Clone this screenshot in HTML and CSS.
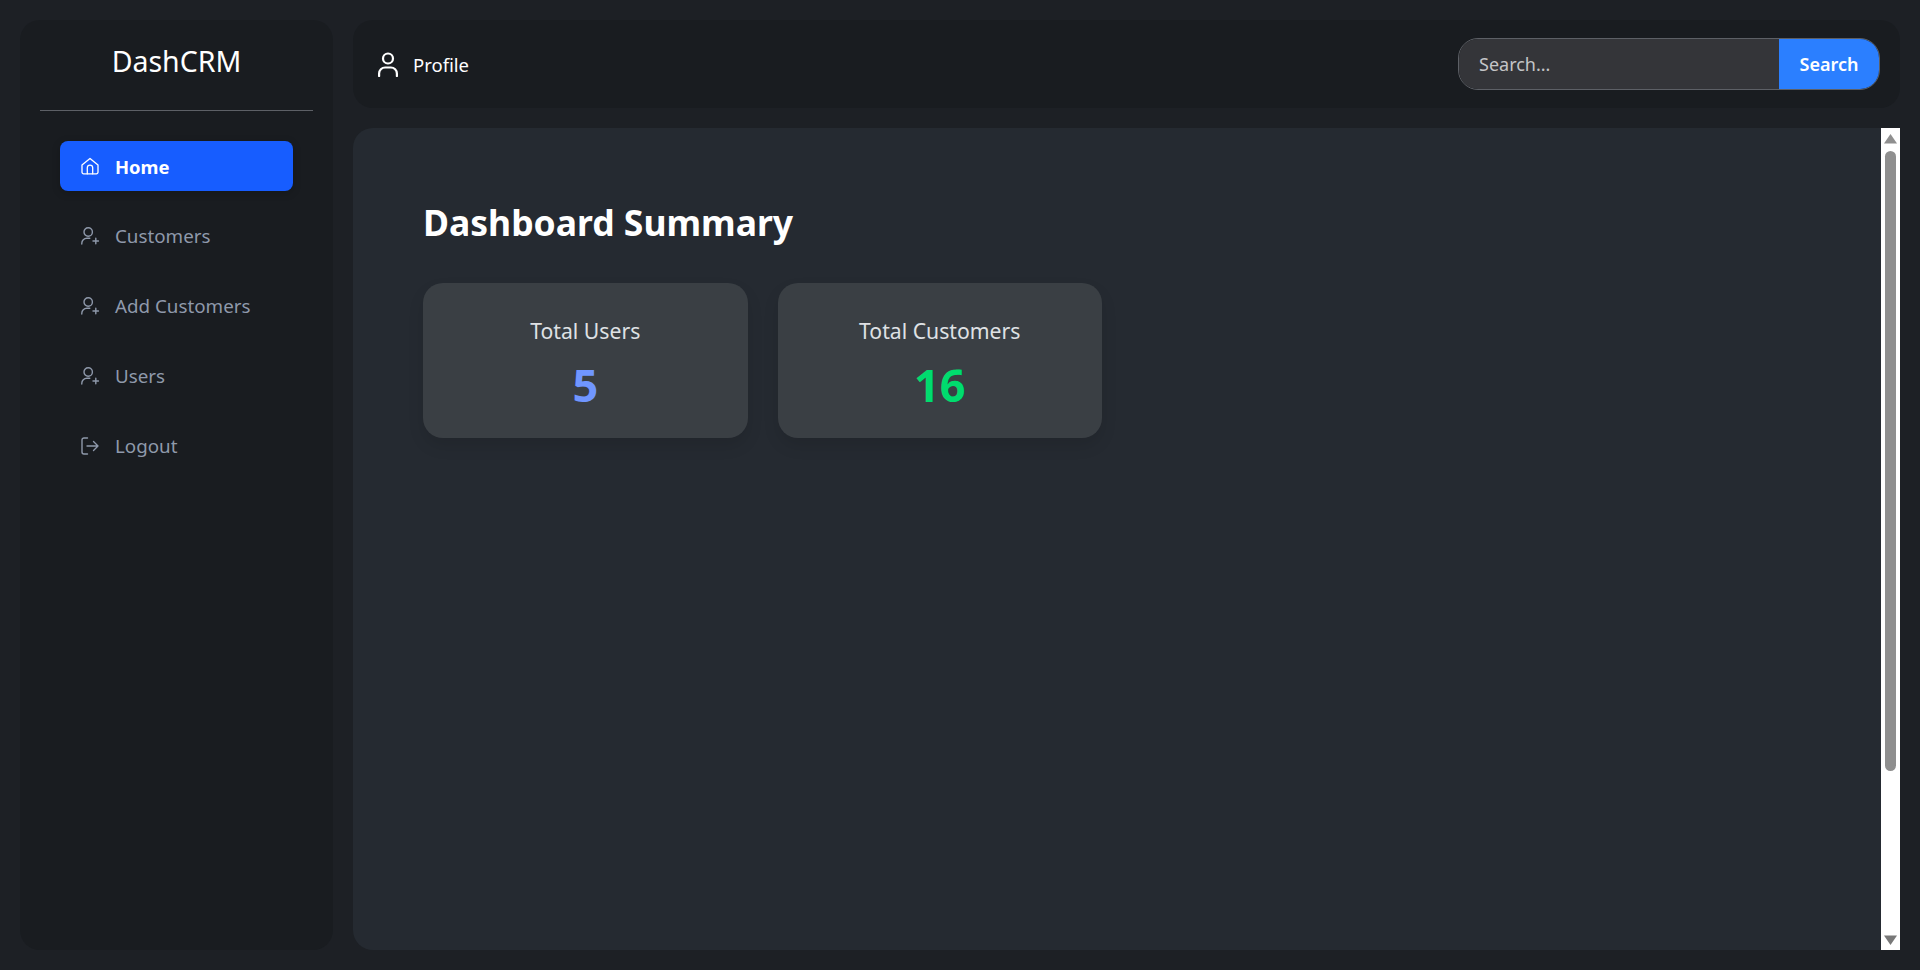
FILE: index.html
```html
<!DOCTYPE html>
<html lang="en">
<head>
<meta charset="utf-8">
<title>DashCRM</title>
<link rel="stylesheet" href="styles.css">
</head>
<body>
<div class="app">
  <aside class="sidebar">
    <h1 class="brand">DashCRM</h1>
    <hr class="rule">
    <nav class="nav">
      <a class="nav-item active" href="#">
        <svg class="nav-icon" viewBox="0 0 18 18" fill="none" stroke="currentColor" stroke-width="1.3" stroke-linejoin="round" stroke-linecap="round"><path d="M1 8l8-6.600L17 8v7.200a1.600 1.600 0 0 1-1.600 1.600H2.600A1.600 1.600 0 0 1 1 15.200z"/><path d="M6.300 16.800v-6a2.700 2.700 0 0 1 5.400 0v6"/></svg>
        <span>Home</span>
      </a>
      <a class="nav-item" href="#">
        <svg class="nav-icon" viewBox="0 0 18 18" fill="none" stroke="currentColor" stroke-width="1.4" stroke-linecap="round"><circle cx="7.200" cy="5" r="4.200"/><path d="M.8 17v-.8a5 5 0 0 1 5-5h3"/><path d="M14.800 11.200v5.600M12 14h5.600"/></svg>
        <span>Customers</span>
      </a>
      <a class="nav-item" href="#">
        <svg class="nav-icon" viewBox="0 0 18 18" fill="none" stroke="currentColor" stroke-width="1.4" stroke-linecap="round"><circle cx="7.200" cy="5" r="4.200"/><path d="M.8 17v-.8a5 5 0 0 1 5-5h3"/><path d="M14.800 11.200v5.600M12 14h5.600"/></svg>
        <span>Add Customers</span>
      </a>
      <a class="nav-item" href="#">
        <svg class="nav-icon" viewBox="0 0 18 18" fill="none" stroke="currentColor" stroke-width="1.4" stroke-linecap="round"><circle cx="7.200" cy="5" r="4.200"/><path d="M.8 17v-.8a5 5 0 0 1 5-5h3"/><path d="M14.800 11.200v5.600M12 14h5.600"/></svg>
        <span>Users</span>
      </a>
      <a class="nav-item" href="#">
        <svg class="nav-icon" viewBox="0 0 18 18" fill="none" stroke="currentColor" stroke-width="1.4" stroke-linecap="round" stroke-linejoin="round"><path d="M6.500 1H3a2 2 0 0 0-2 2v12a2 2 0 0 0 2 2h3.500"/><path d="M6 9h11M12.500 4.500L17 9l-4.500 4.500"/></svg>
        <span>Logout</span>
      </a>
    </nav>
  </aside>
  <div class="column">
    <header class="topbar">
      <a class="profile" href="#">
        <svg class="profile-icon" viewBox="0 0 20 25" fill="none" stroke="currentColor" stroke-width="2.200" stroke-linecap="round"><circle cx="10" cy="6.500" r="5"/><path d="M1.100 24v-2.500a6 6 0 0 1 6-6h5.800a6 6 0 0 1 6 6V24"/></svg>
        <span>Profile</span>
      </a>
      <form class="search">
        <input class="search-input" type="text" placeholder="Search...">
        <button class="search-button" type="button">Search</button>
      </form>
    </header>
    <div class="main-wrap">
      <main class="main">
        <h2 class="title">Dashboard Summary</h2>
        <section class="cards">
          <article class="card">
            <h3 class="card-label">Total Users</h3>
            <p class="card-value blue">5</p>
          </article>
          <article class="card">
            <h3 class="card-label">Total Customers</h3>
            <p class="card-value green">16</p>
          </article>
        </section>
      </main>
      <div class="scrollbar">
        <svg class="arrow" viewBox="0 0 13 10"><path d="M6.500 0L13 9.500H0z"/></svg>
        <div class="thumb"></div>
        <svg class="arrow arrow-down" viewBox="0 0 13 10"><path d="M6.500 10L0 .5h13z"/></svg>
      </div>
    </div>
  </div>
</div>
</body>
</html>
```

FILE: styles.css
```css
* { box-sizing: border-box; }
html, body { height: 100%; }
body {
  margin: 0;
  background: #1d2025;
  color: #fff;
  font-family: "Noto Sans", "Open Sans", sans-serif;
  overflow: hidden;
}
a { text-decoration: none; color: inherit; }

.app {
  display: flex;
  gap: 20px;
  height: 970px;
  padding: 20px;
}

.sidebar {
  width: 313px;
  flex: none;
  background: #191c20;
  border-radius: 20px;
  padding: 0 20px;
}
.brand {
  margin: 0;
  padding-top: 20px;
  height: 90px;
  font-size: 28.5px;
  line-height: 42px;
  font-weight: 400;
  text-align: center;
}
.rule {
  margin: 0;
  border: 0;
  height: 1px;
  background: #5d6066;
}
.nav {
  display: flex;
  flex-direction: column;
  gap: 20px;
  padding: 30px 20px 0;
}
.nav-item {
  display: flex;
  align-items: center;
  gap: 16px;
  height: 50px;
  padding: 0 20px 0 21px;
  border-radius: 8px;
  color: #8f99ab;
  font-size: 18.8px;
}
.nav-item.active {
  background: #175dff;
  color: #fff;
  font-size: 18.4px;
  font-weight: 700;
  box-shadow: 0 2px 8px rgba(0, 0, 0, .2);
}
.nav-icon { width: 18px; height: 18px; flex: none; }

.column {
  flex: 1;
  min-width: 0;
  display: flex;
  flex-direction: column;
  gap: 20px;
}
.topbar {
  height: 88px;
  flex: none;
  display: flex;
  align-items: center;
  justify-content: space-between;
  padding: 0 20px 0 25px;
  background: #191c20;
  border-radius: 20px;
}
.profile {
  display: flex;
  align-items: center;
  gap: 15px;
  font-size: 18.5px;
}
.profile-icon { width: 20px; height: 25px; flex: none; }

.search {
  display: flex;
  width: 422px;
  height: 52px;
  border: 1px solid #5d6066;
  border-radius: 20px;
  overflow: hidden;
}
.search-input {
  flex: 1;
  min-width: 0;
  border: 0;
  outline: 0;
  padding: 0 20px;
  background: #343539;
  color: #fff;
  font: inherit;
  font-size: 18px;
}
.search-input::placeholder { color: #c4c5c7; opacity: 1; }
.search-button {
  width: 100px;
  border: 0;
  padding: 0;
  background: #2b7fff;
  color: #fff;
  font: inherit;
  font-size: 18px;
  font-weight: 600;
}

.main-wrap {
  flex: 1;
  min-height: 0;
  display: flex;
}
.main {
  flex: 1;
  min-width: 0;
  background: #252a31;
  border-radius: 20px 0 0 20px;
  padding: 67px 70px;
}
.title {
  margin: 0 0 34px;
  font-size: 35.5px;
  line-height: 54px;
  font-weight: 700;
}
.cards {
  display: flex;
  gap: 30px;
}
.card {
  width: 324.500px;
  height: 155px;
  padding-top: 30px;
  background: #3a3f44;
  border-radius: 20px;
  box-shadow: 0 8px 16px rgba(0, 0, 0, .1);
  text-align: center;
}
.card-label {
  margin: 0;
  font-size: 21.200px;
  line-height: 36px;
  font-weight: 400;
  color: #dfe1e4;
}
.card-value {
  margin: 6px 0 0;
  font-size: 45px;
  line-height: 60px;
  font-weight: 700;
}
.blue { color: #7096ff; }
.green { color: #00dc6e; }

.scrollbar {
  width: 19px;
  flex: none;
  display: flex;
  flex-direction: column;
  align-items: center;
  background: #fff;
  padding-top: 6px;
  padding-bottom: 5px;
}
.arrow {
  width: 13px;
  height: 10px;
  flex: none;
  fill: #8f8f8f;
}
.arrow-down { margin-top: auto; fill: #787878; }
.thumb {
  width: 11px;
  height: 620px;
  margin-top: 7px;
  background: #8f8f8f;
  border-radius: 6px;
}
```
